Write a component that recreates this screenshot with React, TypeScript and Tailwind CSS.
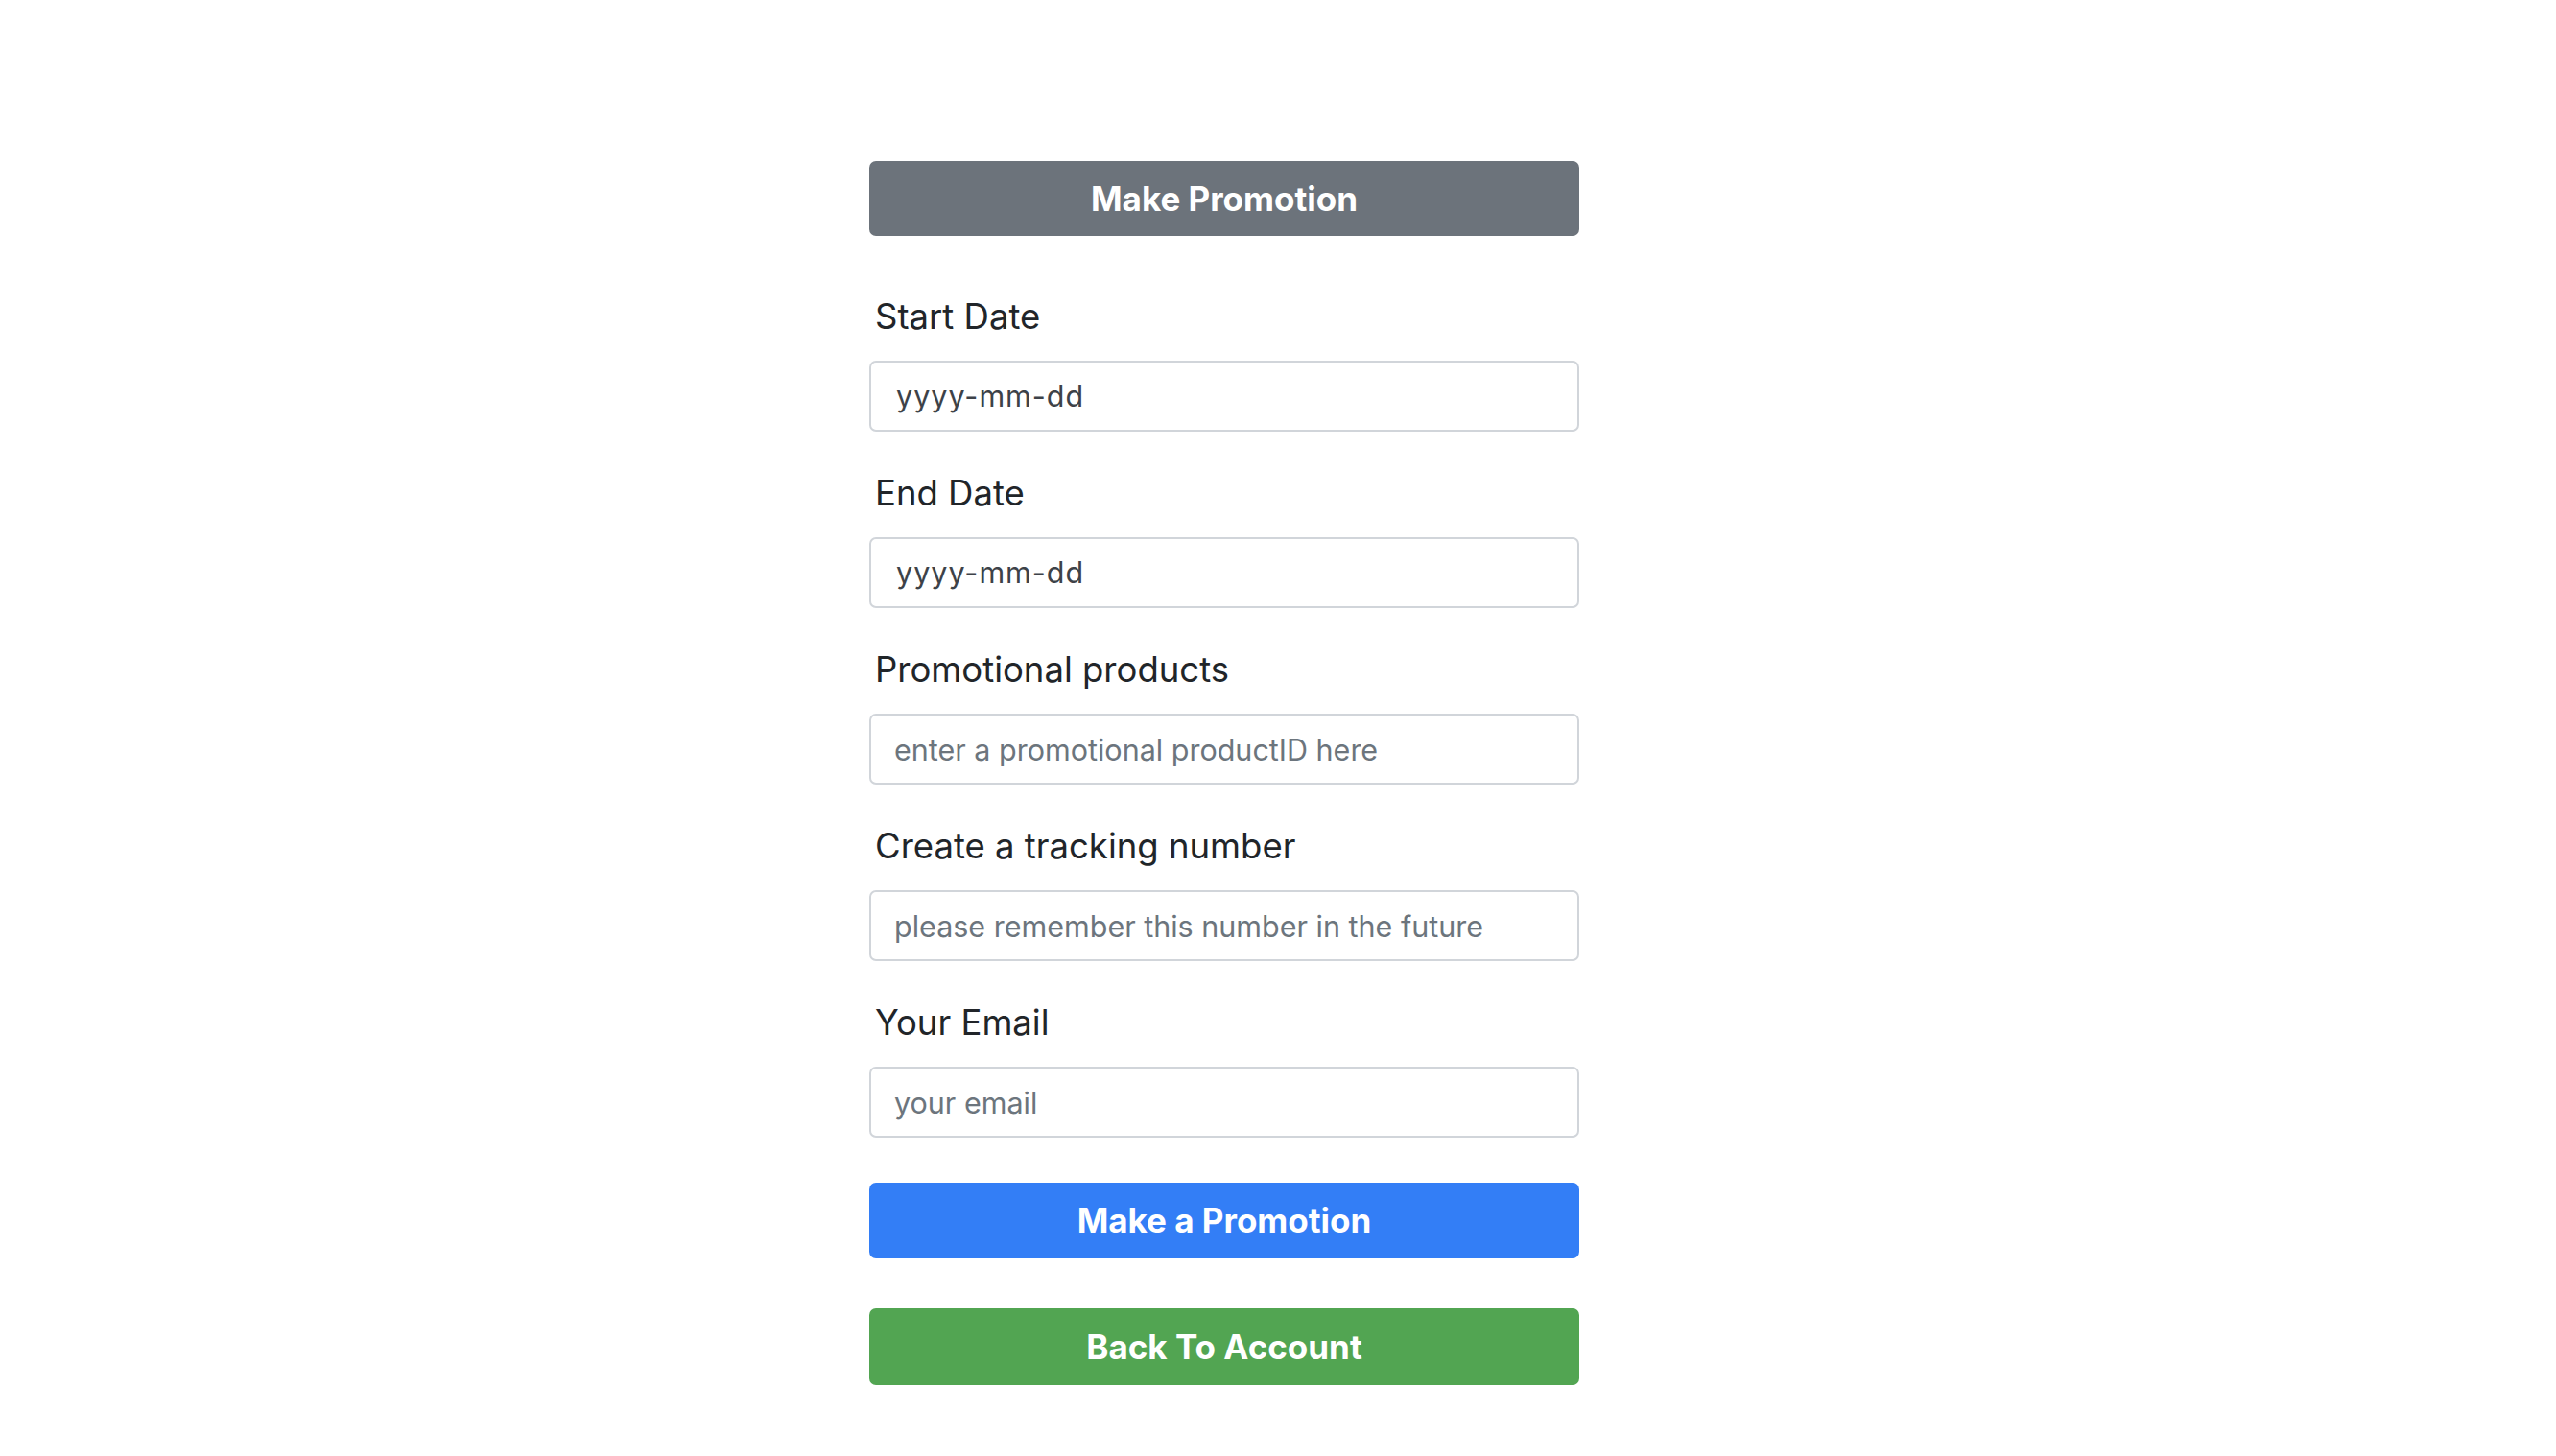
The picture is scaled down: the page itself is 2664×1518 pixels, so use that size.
const fields = [
  { label: 'Start Date', placeholder: 'yyyy-mm-dd', date: true },
  { label: 'End Date', placeholder: 'yyyy-mm-dd', date: true },
  { label: 'Promotional products', placeholder: 'enter a promotional productID here' },
  { label: 'Create a tracking number', placeholder: 'please remember this number in the future' },
  { label: 'Your Email', placeholder: 'your email' },
];

export default function App() {
  return (
    <div className="min-h-screen bg-white font-['Inter',sans-serif] text-[#212529]">
      <div className="pt-[168px] pb-[72px] pl-[906px]">
        <form className="w-[740px] flex flex-col" onSubmit={(e) => e.preventDefault()}>
          <div className="h-[78px] rounded-[7px] bg-[#6c737b] flex items-center justify-center text-white text-[35px] font-bold">
            Make Promotion
          </div>

          <div className="mt-[62px] flex flex-col gap-[42px]">
            {fields.map((f) => (
              <div key={f.label} className="flex flex-col">
                <label className="pl-[6px] text-[36.5px] leading-[44px] mb-[24px]">{f.label}</label>
                {f.date ? (
                  <div className="h-[74px] rounded-[7px] border-2 border-[#d1d5da] flex items-center pl-[26px] text-[30.5px] tracking-[1px] text-[#3d4248]">
                    {f.placeholder}
                  </div>
                ) : (
                  <input
                    placeholder={f.placeholder}
                    className="h-[74px] rounded-[7px] border-2 border-[#d1d5da] pl-[24px] text-[30.5px] outline-none placeholder:text-[#6c757d]"
                  />
                )}
              </div>
            ))}
          </div>

          <button
            type="submit"
            className="mt-[47px] h-[79px] rounded-[7px] bg-[#337ef6] text-white text-[35px] font-bold"
          >
            Make a Promotion
          </button>
          <button
            type="button"
            className="mt-[52px] h-[80px] rounded-[7px] bg-[#52a552] text-white text-[35px] font-bold"
          >
            Back To Account
          </button>
        </form>
      </div>
    </div>
  );
}
